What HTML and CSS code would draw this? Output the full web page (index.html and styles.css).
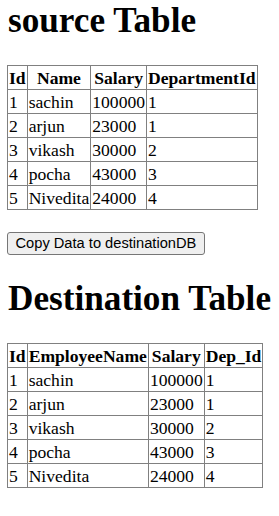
FILE: index.html
```html
<!DOCTYPE html>
<html>
<head>
<meta charset="utf-8">
<link rel="stylesheet" href="styles.css">
</head>
<body>
<h1 class="title first">source Table</h1>
<table class="grid">
<tr><th>Id</th><th>Name</th><th>Salary</th><th>DepartmentId</th></tr>
<tr><td>1</td><td>sachin</td><td>100000</td><td>1</td></tr>
<tr><td>2</td><td>arjun</td><td>23000</td><td>1</td></tr>
<tr><td>3</td><td>vikash</td><td>30000</td><td>2</td></tr>
<tr><td>4</td><td>pocha</td><td>43000</td><td>3</td></tr>
<tr><td>5</td><td>Nivedita</td><td>24000</td><td>4</td></tr>
</table>
<div class="actions"><button class="copy-btn">Copy Data to destinationDB</button></div>
<h1 class="title">Destination Table</h1>
<table class="grid">
<tr><th>Id</th><th>EmployeeName</th><th>Salary</th><th>Dep_Id</th></tr>
<tr><td>1</td><td>sachin</td><td>100000</td><td>1</td></tr>
<tr><td>2</td><td>arjun</td><td>23000</td><td>1</td></tr>
<tr><td>3</td><td>vikash</td><td>30000</td><td>2</td></tr>
<tr><td>4</td><td>pocha</td><td>43000</td><td>3</td></tr>
<tr><td>5</td><td>Nivedita</td><td>24000</td><td>4</td></tr>
</table>
</body>
</html>
```
FILE: styles.css
```css
html, body {
  margin: 0;
  padding: 0;
  background: #fff;
}
body {
  padding: 1px 0 0 7px;
  font-family: "Liberation Serif", "Times New Roman", serif;
  font-size: 17.6px;
  color: #000;
}
.title {
  font-size: 35.2px;
  font-weight: bold;
  margin: 23.6px 0 24px 1px;
  line-height: 40.4px;
}
.title.first {
  margin-top: 0;
}
.grid {
  border-collapse: collapse;
  border: 1px solid #808080;
}
.grid th, .grid td {
  border: 1px solid #808080;
  padding: 1px 1px;
  height: 21px;
  line-height: 20px;
  vertical-align: middle;
}
.grid th {
  font-weight: bold;
  text-align: center;
}
.grid td {
  text-align: left;
}
.actions {
  margin-top: 22px;
}
.copy-btn {
  font-family: "Liberation Sans", Arial, sans-serif;
  font-size: 14.67px;
  color: #000;
  background: #efefef;
  border: 1px solid #767676;
  border-radius: 3px;
  height: 23px;
  padding: 0 7.5px;
  margin: 0;
  line-height: 17px;
}
```
